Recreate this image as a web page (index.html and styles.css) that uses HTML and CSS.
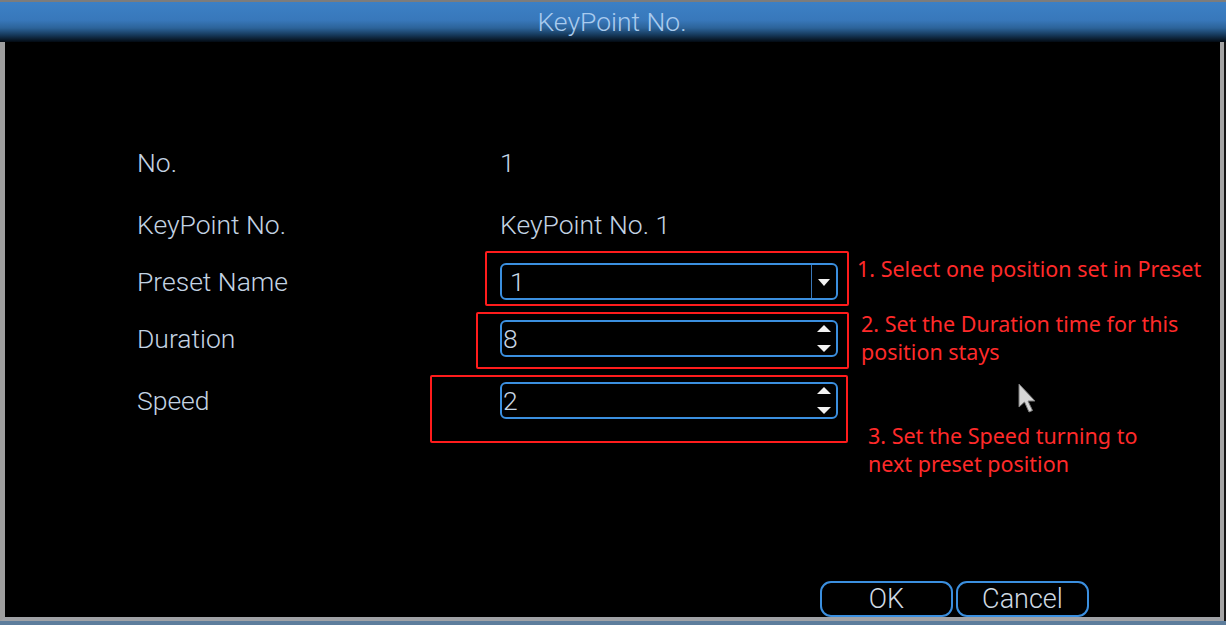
FILE: index.html
```html
<!DOCTYPE html>
<html lang="en">
<head>
    <meta charset="UTF-8">
    <title>KeyPoint No.</title>
    <link rel="stylesheet" href="styles.css">
</head>
<body>
    <div class="screen">
        <div class="titlebar">KeyPoint No.</div>
        <div class="panel">
            <div class="form">
                <div class="label">No.</div>
                <div class="value">1</div>
                <div></div>

                <div class="label">KeyPoint No.</div>
                <div class="value">KeyPoint No. 1</div>
                <div></div>

                <div class="label">Preset Name</div>
                <div class="cell">
                    <div class="field select"><span class="text">1</span><span class="drop"></span></div>
                    <div class="mark mark-1"></div>
                </div>
                <div class="note note-1">1. Select one position set in Preset</div>

                <div class="label">Duration</div>
                <div class="cell">
                    <div class="field spin"><span class="text">8</span><span class="arrows"><i class="up"></i><i class="down"></i></span></div>
                    <div class="mark mark-2"></div>
                </div>
                <div class="note note-2">2. Set the Duration time for this<br>position stays</div>

                <div class="label">Speed</div>
                <div class="cell">
                    <div class="field spin"><span class="text">2</span><span class="arrows"><i class="up"></i><i class="down"></i></span></div>
                    <div class="mark mark-3"></div>
                </div>
                <div class="note note-3">3. Set the Speed turning to<br>next preset position</div>
            </div>

            <div class="actions">
                <button class="btn">OK</button>
                <button class="btn">Cancel</button>
            </div>

            <!-- mouse pointer captured in the screenshot -->
            <svg class="cursor" width="20" height="31" viewBox="0 0 20 31">
                <path d="M1 1 L1 24 L6.5 19 L11 29 L14.5 27.5 L10 18 L17 18 Z" fill="#d6d6d6" stroke="#7a7a7a" stroke-width="1"/>
            </svg>
        </div>
    </div>
</body>
</html>
```

FILE: styles.css
```css
html, body {
    margin: 0;
    height: 100%;
}
body {
    background: #5d7d9c;
    font-family: Roboto, 'Liberation Sans', Arial, sans-serif;
    font-weight: 300;
    color: #c3d3e3;
    overflow: hidden;
}
.screen {
    width: 1226px;
    height: 621px;
    display: flex;
    flex-direction: column;
    background: #151515;
}
.titlebar {
    height: 40px;
    border-top: 2px solid #7c7c7c;
    background: linear-gradient(#3c80c5 0%, #3878bb 45%, #2c6399 65%, #163a5c 82%, #030a12 100%);
    color: #a9cbee;
    font-size: 26.5px;
    line-height: 40px;
    text-align: center;
    padding-right: 2px;
}
.panel {
    flex: 1;
    position: relative;
    display: flex;
    flex-direction: column;
    background: #000;
    border-left: 5px solid #9e9e9e;
    border-right: 4px solid #a4a4a4;
    border-bottom: 4px solid #a0a2a6;
    margin-right: 2px;
}
.form {
    display: grid;
    grid-template-columns: 363px 338px 1fr;
    grid-template-rows: 62px 62px 52px 62px 62px;
    padding: 89px 0 0 132px;
    font-size: 26.5px;
}
.label, .value {
    align-self: center;
}
.cell {
    position: relative;
    align-self: center;
}
.field {
    height: 33px;
    border: 2px solid #3b8fdf;
    border-radius: 6px;
    display: flex;
    align-items: center;
    color: #c8d6e4;
}
.select .text {
    flex: 1;
    padding-left: 8px;
}
.spin .text {
    flex: 1;
    padding-left: 1px;
}
.drop {
    width: 24px;
    height: 100%;
    border-left: 1px solid #3a78b8;
    display: flex;
    align-items: center;
    justify-content: center;
}
.drop::after {
    content: "";
    border-left: 6px solid transparent;
    border-right: 6px solid transparent;
    border-top: 7px solid #f2f2f2;
    margin-top: 2px;
}
.arrows {
    width: 24px;
    height: 100%;
    display: flex;
    flex-direction: column;
    justify-content: space-between;
    align-items: center;
    padding: 3px 0;
    box-sizing: border-box;
}
.arrows i {
    width: 0;
    height: 0;
    border-left: 7px solid transparent;
    border-right: 7px solid transparent;
}
.arrows .up {
    border-bottom: 7px solid #f2f2f2;
}
.arrows .down {
    border-top: 7px solid #f2f2f2;
}
.mark {
    position: absolute;
    border: 2px solid #ff1c1c;
    border-radius: 2px;
}
.mark-1 {
    left: -15px;
    right: -11px;
    top: -12px;
    bottom: -6px;
}
.mark-2 {
    left: -24px;
    right: -11px;
    top: -8px;
    bottom: -12px;
}
.mark-3 {
    left: -70px;
    right: -10px;
    top: -7px;
    bottom: -24px;
}
.note {
    font-family: 'Noto Sans', 'Open Sans', sans-serif;
    font-weight: 400;
    font-size: 21.5px;
    line-height: 28px;
    color: #ff2a2a;
    white-space: nowrap;
}
.note-1 {
    align-self: start;
    margin-left: 19px;
}
.note-2 {
    align-self: center;
    margin-left: 23px;
}
.note-3 {
    align-self: start;
    margin: 53px 0 0 30px;
}
.actions {
    margin-top: auto;
    display: flex;
    justify-content: flex-end;
    gap: 3px;
    padding-right: 131px;
}
.btn {
    width: 133px;
    height: 36px;
    background: #000;
    border: 2px solid #3b8fdf;
    border-radius: 11px;
    color: #cfd9e3;
    font-family: Roboto, 'Liberation Sans', Arial, sans-serif;
    font-weight: 300;
    font-size: 27px;
    line-height: 30px;
    padding: 0;
}
.cursor {
    position: absolute;
    left: 1013px;
    top: 341px;
}
```
